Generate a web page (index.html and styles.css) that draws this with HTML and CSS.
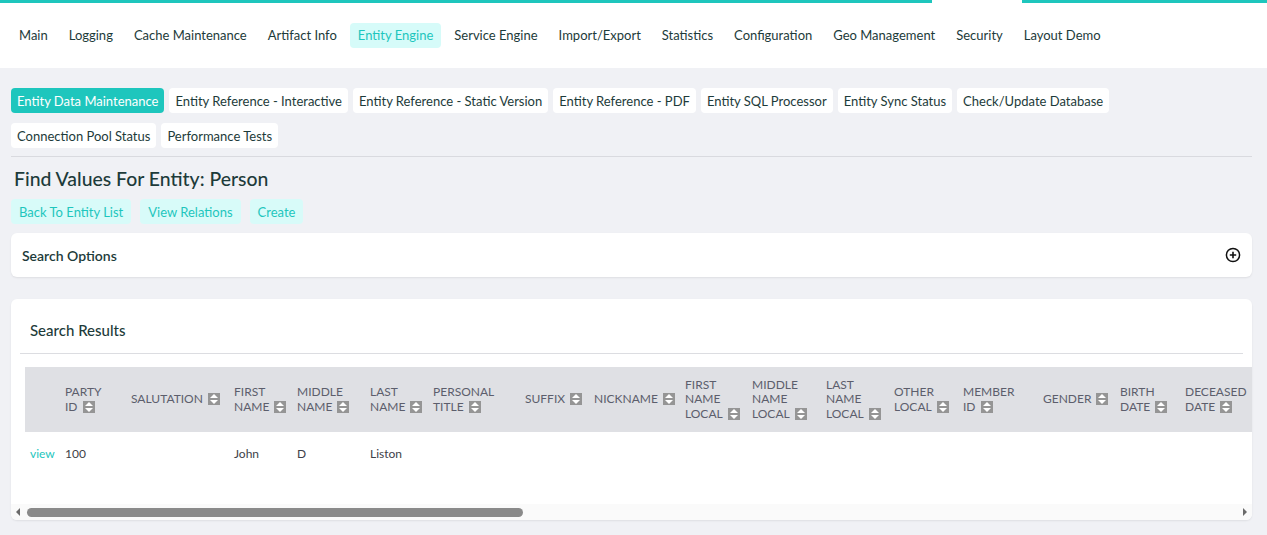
FILE: index.html
```html
<!DOCTYPE html>
<html lang="en">
<head>
<meta charset="utf-8">
<title>Find Values For Entity: Person</title>
<link rel="stylesheet" href="styles.css">
</head>
<body>
<div class="progress"><span class="seg seg-a"></span><span class="seg-gap"></span><span class="seg seg-b"></span></div>
<header class="topbar">
  <nav class="mainnav">
    <a class="navitem">Main</a>
    <a class="navitem">Logging</a>
    <a class="navitem">Cache Maintenance</a>
    <a class="navitem">Artifact Info</a>
    <a class="navitem active">Entity Engine</a>
    <a class="navitem">Service Engine</a>
    <a class="navitem">Import/Export</a>
    <a class="navitem">Statistics</a>
    <a class="navitem">Configuration</a>
    <a class="navitem">Geo Management</a>
    <a class="navitem">Security</a>
    <a class="navitem">Layout Demo</a>
  </nav>
</header>
<main class="page">
  <nav class="subnav">
    <a class="subitem active">Entity Data Maintenance</a>
    <a class="subitem">Entity Reference - Interactive</a>
    <a class="subitem">Entity Reference - Static Version</a>
    <a class="subitem">Entity Reference - PDF</a>
    <a class="subitem">Entity SQL Processor</a>
    <a class="subitem">Entity Sync Status</a>
    <a class="subitem">Check/Update Database</a>
    <a class="subitem">Connection Pool Status</a>
    <a class="subitem">Performance Tests</a>
  </nav>
  <hr class="divider">
  <h1 class="title">Find Values For Entity: Person</h1>
  <div class="actions">
    <a class="btn-light">Back To Entity List</a>
    <a class="btn-light">View Relations</a>
    <a class="btn-light">Create</a>
  </div>
  <section class="card options">
    <h2 class="options-title">Search Options</h2>
    <svg class="plus" width="16" height="16" viewBox="0 0 16 16" aria-hidden="true">
      <circle cx="8" cy="8" r="6.6" fill="none" stroke="#111" stroke-width="1.5"/>
      <path d="M8 4.8v6.4M4.8 8h6.4" stroke="#111" stroke-width="1.6" fill="none"/>
    </svg>
  </section>
  <section class="card results">
    <h2 class="results-title">Search Results</h2>
    <hr class="results-rule">
    <div class="table-wrap">
    <table class="grid">
      <thead>
        <tr>
          <th></th>
          <th>Party <span class="nw">ID<i class="sort"></i></span></th>
          <th><span class="nw">Salutation<i class="sort"></i></span></th>
          <th>First <span class="nw">Name<i class="sort"></i></span></th>
          <th>Middle <span class="nw">Name<i class="sort"></i></span></th>
          <th>Last <span class="nw">Name<i class="sort"></i></span></th>
          <th>Personal <span class="nw">Title<i class="sort"></i></span></th>
          <th><span class="nw">Suffix<i class="sort"></i></span></th>
          <th><span class="nw">Nickname<i class="sort"></i></span></th>
          <th>First Name <span class="nw">Local<i class="sort"></i></span></th>
          <th>Middle Name <span class="nw">Local<i class="sort"></i></span></th>
          <th>Last Name <span class="nw">Local<i class="sort"></i></span></th>
          <th>Other <span class="nw">Local<i class="sort"></i></span></th>
          <th>Member <span class="nw">ID<i class="sort"></i></span></th>
          <th><span class="nw">Gender<i class="sort"></i></span></th>
          <th>Birth <span class="nw">Date<i class="sort"></i></span></th>
          <th>Deceased <span class="nw">Date<i class="sort"></i></span></th>
          <th><span class="nw">Height<i class="sort"></i></span></th>
          <th><span class="nw">Weight<i class="sort"></i></span></th>
          <th>Mothers Maiden <span class="nw">Name<i class="sort"></i></span></th>
          <th>Old Marital <span class="nw">Status<i class="sort"></i></span></th>
          <th>Marital Status Enum <span class="nw">ID<i class="sort"></i></span></th>
          <th>Social Security <span class="nw">Number<i class="sort"></i></span></th>
          <th>Passport <span class="nw">Number<i class="sort"></i></span></th>
          <th>Passport Expire <span class="nw">Date<i class="sort"></i></span></th>
          <th>Total Years Work <span class="nw">Experience<i class="sort"></i></span></th>
          <th><span class="nw">Comments<i class="sort"></i></span></th>
          <th>Employment Status Enum <span class="nw">ID<i class="sort"></i></span></th>
          <th>Residence Status Enum <span class="nw">ID<i class="sort"></i></span></th>
          <th><span class="nw">Occupation<i class="sort"></i></span></th>
          <th>Years With <span class="nw">Employer<i class="sort"></i></span></th>
          <th>Months With <span class="nw">Employer<i class="sort"></i></span></th>
          <th>Existing <span class="nw">Customer<i class="sort"></i></span></th>
          <th>Card <span class="nw">ID<i class="sort"></i></span></th>
        </tr>
      </thead>
      <tbody>
        <tr>
          <td><a class="view">view</a></td>
          <td>100</td>
          <td></td>
          <td>John</td>
          <td>D</td>
          <td>Liston</td>
          <td></td><td></td><td></td><td></td><td></td><td></td><td></td><td></td><td></td><td></td><td></td>
          <td></td><td></td><td></td><td></td><td></td><td></td><td></td><td></td><td></td><td></td><td></td><td></td><td></td><td></td><td></td><td></td><td></td>
        </tr>
      </tbody>
    </table>
    </div>
    <div class="hscroll" aria-hidden="true">
      <span class="arrow arrow-left"></span>
      <span class="track"><span class="thumb"></span></span>
      <span class="arrow arrow-right"></span>
    </div>
  </section>
</main>
</body>
</html>
```

FILE: styles.css
```css
* { box-sizing: border-box; }
html, body { margin: 0; padding: 0; }
body {
  background: #f0f1f5;
  font-family: Lato, "Open Sans", sans-serif;
  font-size: 13px;
  color: #1d3b3a;
}
a { cursor: pointer; }

.progress {
  display: flex;
  height: 3px;
  background: #fff;
}
.seg { background: #1ec6bd; }
.seg-a { width: 932px; }
.seg-gap { width: 90px; }
.seg-b { flex: 1; }

.topbar {
  background: #fff;
  height: 65px;
  display: flex;
  align-items: center;
}
.mainnav {
  display: flex;
  gap: 5px;
  padding: 0 11px;
  margin-top: -1px;
}
.navitem {
  padding: 5px 8px;
  border-radius: 4px;
  color: #1d3b3a;
  line-height: 15px;
  white-space: nowrap;
}
.navitem.active {
  background: #d6fbf9;
  color: #1ec6bd;
}

.page { padding: 20px 15px 16px 11px; }

.subnav {
  display: flex;
  flex-wrap: wrap;
  gap: 10px 5px;
}
.subitem {
  background: #fff;
  border-radius: 4px;
  height: 25px;
  padding: 0 6px;
  display: flex;
  align-items: center;
  color: #1d3b3a;
  white-space: nowrap;
}
.subitem.active {
  background: #1ec6bd;
  color: #fff;
}

.divider {
  border: 0;
  border-top: 1px solid #d9dadf;
  margin: 8px 0 0 0;
}

.title {
  font-size: 19.4px;
  font-weight: 500;
  margin: 9px 0 0 3px;
  line-height: 26px;
  color: #1d3b3a;
}

.actions {
  display: flex;
  gap: 9px;
  margin-top: 7px;
}
.btn-light {
  background: #d8fbf9;
  color: #1ec6bd;
  height: 25px;
  padding: 0 8px;
  border-radius: 4px;
  display: flex;
  align-items: center;
}

.card {
  background: #fff;
  border-radius: 6px;
  box-shadow: 0 1px 2px rgba(0,0,0,0.08);
}
.options {
  margin-top: 9px;
  height: 44px;
  display: flex;
  align-items: center;
  justify-content: space-between;
  padding: 0 11px;
}
.options-title {
  margin: 0;
  font-size: 14px;
  font-weight: 600;
  color: #1d3b3a;
}
.plus { display: block; }

.results {
  margin-top: 22px;
  overflow: hidden;
}
.results-title {
  margin: 0;
  padding: 22px 0 0 19px;
  font-size: 15px;
  font-weight: 500;
  line-height: 18px;
  color: #1d3b3a;
}
.results-rule {
  border: 0;
  border-top: 1px solid #dcdde1;
  margin: 14px 9px 0 9px;
}

.table-wrap {
  overflow: hidden;
  padding: 13px 0 30px 14px;
}
.grid {
  border-collapse: collapse;
  table-layout: fixed;
  width: 3010px;
}
.grid th {
  background: #dfe0e4;
  height: 65px;
  padding: 0 5px;
  text-align: left;
  vertical-align: middle;
  font-weight: 400;
  font-size: 12px;
  line-height: 14.5px;
  text-transform: uppercase;
  color: #5c5e6c;
}
.grid td {
  height: 42px;
  padding: 0 5px;
  color: #3d4147;
  font-size: 12px;
  vertical-align: middle;
}
.grid .view { color: #1ec6bd; }
.nw { white-space: nowrap; }

.sort {
  position: relative;
  display: inline-block;
  width: 12px;
  height: 12px;
  margin-left: 5px;
  vertical-align: -2px;
  background: #959595;
}
.sort::before,
.sort::after {
  content: "";
  position: absolute;
  left: 2px;
  width: 0;
  height: 0;
  border-left: 4px solid transparent;
  border-right: 4px solid transparent;
}
.sort::before {
  top: 1px;
  border-bottom: 4px solid #fff;
}
.sort::after {
  top: 7px;
  border-top: 4px solid #fff;
}

.grid th:nth-child(1) { width: 35px; }
.grid th:nth-child(2) { width: 66px; }
.grid th:nth-child(3) { width: 103px; }
.grid th:nth-child(4) { width: 63px; }
.grid th:nth-child(5) { width: 73px; }
.grid th:nth-child(6) { width: 63px; }
.grid th:nth-child(7) { width: 92px; }
.grid th:nth-child(8) { width: 69px; }
.grid th:nth-child(9) { width: 91px; }
.grid th:nth-child(10) { width: 67px; }
.grid th:nth-child(11) { width: 74px; }
.grid th:nth-child(12) { width: 68px; }
.grid th:nth-child(13) { width: 69px; }
.grid th:nth-child(14) { width: 80px; }
.grid th:nth-child(15) { width: 77px; }
.grid th:nth-child(16) { width: 65px; }
.grid th:nth-child(17) { width: 80px; }

.hscroll {
  display: flex;
  align-items: center;
  height: 16px;
  background: #fafafa;
}
.arrow {
  width: 0;
  height: 0;
  border-top: 4px solid transparent;
  border-bottom: 4px solid transparent;
}
.arrow-left {
  margin: 0 6px 0 5px;
  border-right: 4px solid #6a6a6a;
}
.arrow-right {
  margin: 0 5px 0 6px;
  border-left: 4px solid #6a6a6a;
}
.track {
  flex: 1;
  height: 9px;
  padding-left: 1px;
}
.thumb {
  display: block;
  width: 496px;
  height: 9px;
  border-radius: 5px;
  background: #8a8a8a;
}
```
